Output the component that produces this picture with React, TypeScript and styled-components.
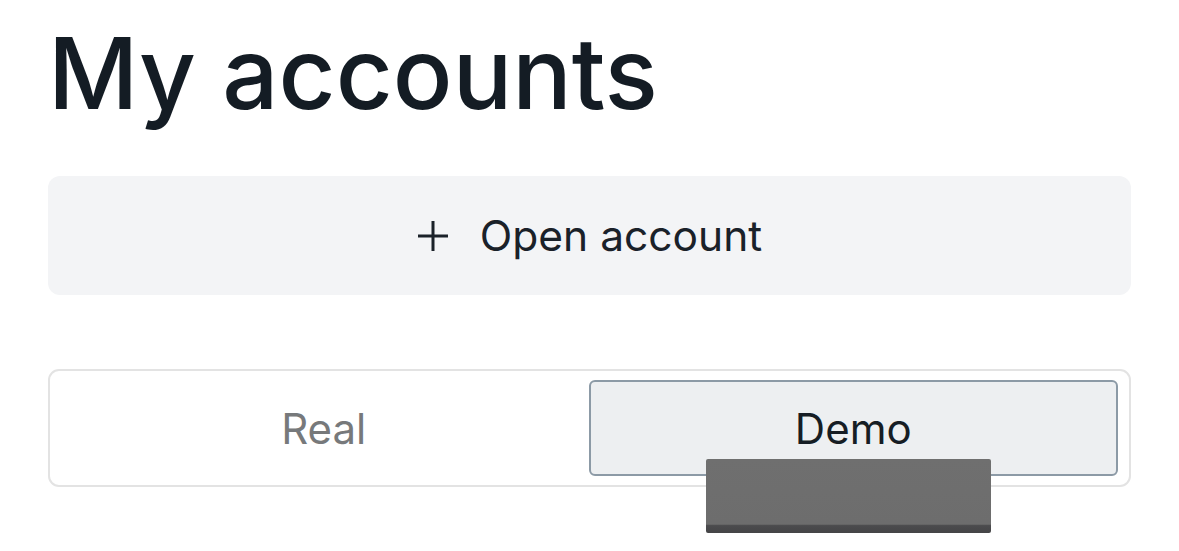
import React from "react";
import styled, { createGlobalStyle } from "styled-components";

const GlobalStyle = createGlobalStyle`
  html, body {
    margin: 0;
    padding: 0;
    background: #ffffff;
  }
  body {
    font-family: Inter, "Noto Sans", sans-serif;
    color: #161e26;
  }
`;

const Page = styled.main`
  display: flex;
  flex-direction: column;
  padding: 18px 48px 0 48px;
  box-sizing: border-box;
  width: 1179px;
  min-height: 551px;
`;

const Title = styled.h1`
  margin: 0;
  font-family: Inter, "Noto Sans", sans-serif;
  font-size: 99px;
  font-weight: 500;
  line-height: 110px;
  letter-spacing: 0;
  color: #141c24;
`;

const OpenButton = styled.button`
  margin-top: 48px;
  height: 119px;
  border: none;
  border-radius: 12px;
  background: #f3f4f6;
  display: flex;
  align-items: center;
  justify-content: center;
  gap: 31px;
  font-family: Inter, "Noto Sans", sans-serif;
  font-size: 42.5px;
  font-weight: 400;
  color: #1a2129;
  cursor: pointer;
`;

const PlusIcon = styled.svg`
  width: 32px;
  height: 32px;
  flex: none;
`;

const SegmentWrap = styled.div`
  position: relative;
  margin-top: 74px;
`;

const Segment = styled.div`
  height: 118px;
  box-sizing: border-box;
  border: 2px solid #e3e3e3;
  border-radius: 11px;
  padding: 9px 11px 9px 9px;
  display: grid;
  grid-template-columns: 1fr 1fr;
`;

const SegmentOption = styled.button<{ $active?: boolean }>`
  border: 2px solid ${(p) => (p.$active ? "#8c9aa6" : "transparent")};
  background: ${(p) => (p.$active ? "#edeff1" : "transparent")};
  border-radius: 6px;
  display: flex;
  align-items: center;
  justify-content: center;
  font-family: Inter, "Noto Sans", sans-serif;
  font-size: 42px;
  font-weight: 400;
  color: ${(p) => (p.$active ? "#161d24" : "#77797b")};
  padding: 0;
  cursor: pointer;
`;

const Redaction = styled.div`
  position: absolute;
  left: 658px;
  top: 90px;
  width: 285px;
  height: 74px;
  border-radius: 2px;
  background: linear-gradient(
    to bottom,
    #6f6f6f 0%,
    #6d6d6d 88%,
    #4b4b4d 90%,
    #454547 100%
  );
`;

export default function App() {
  return (
    <>
      <GlobalStyle />
      <Page>
        <Title>My accounts</Title>
        <OpenButton>
          <PlusIcon viewBox="0 0 32 32" fill="none" stroke="#1a2129" strokeWidth="3" strokeLinecap="butt">
            <path d="M16 1v30M1 16h30" />
          </PlusIcon>
          <span>Open account</span>
        </OpenButton>
        <SegmentWrap>
          <Segment>
            <SegmentOption>Real</SegmentOption>
            <SegmentOption $active>Demo</SegmentOption>
          </Segment>
          <Redaction />
        </SegmentWrap>
      </Page>
    </>
  );
}
